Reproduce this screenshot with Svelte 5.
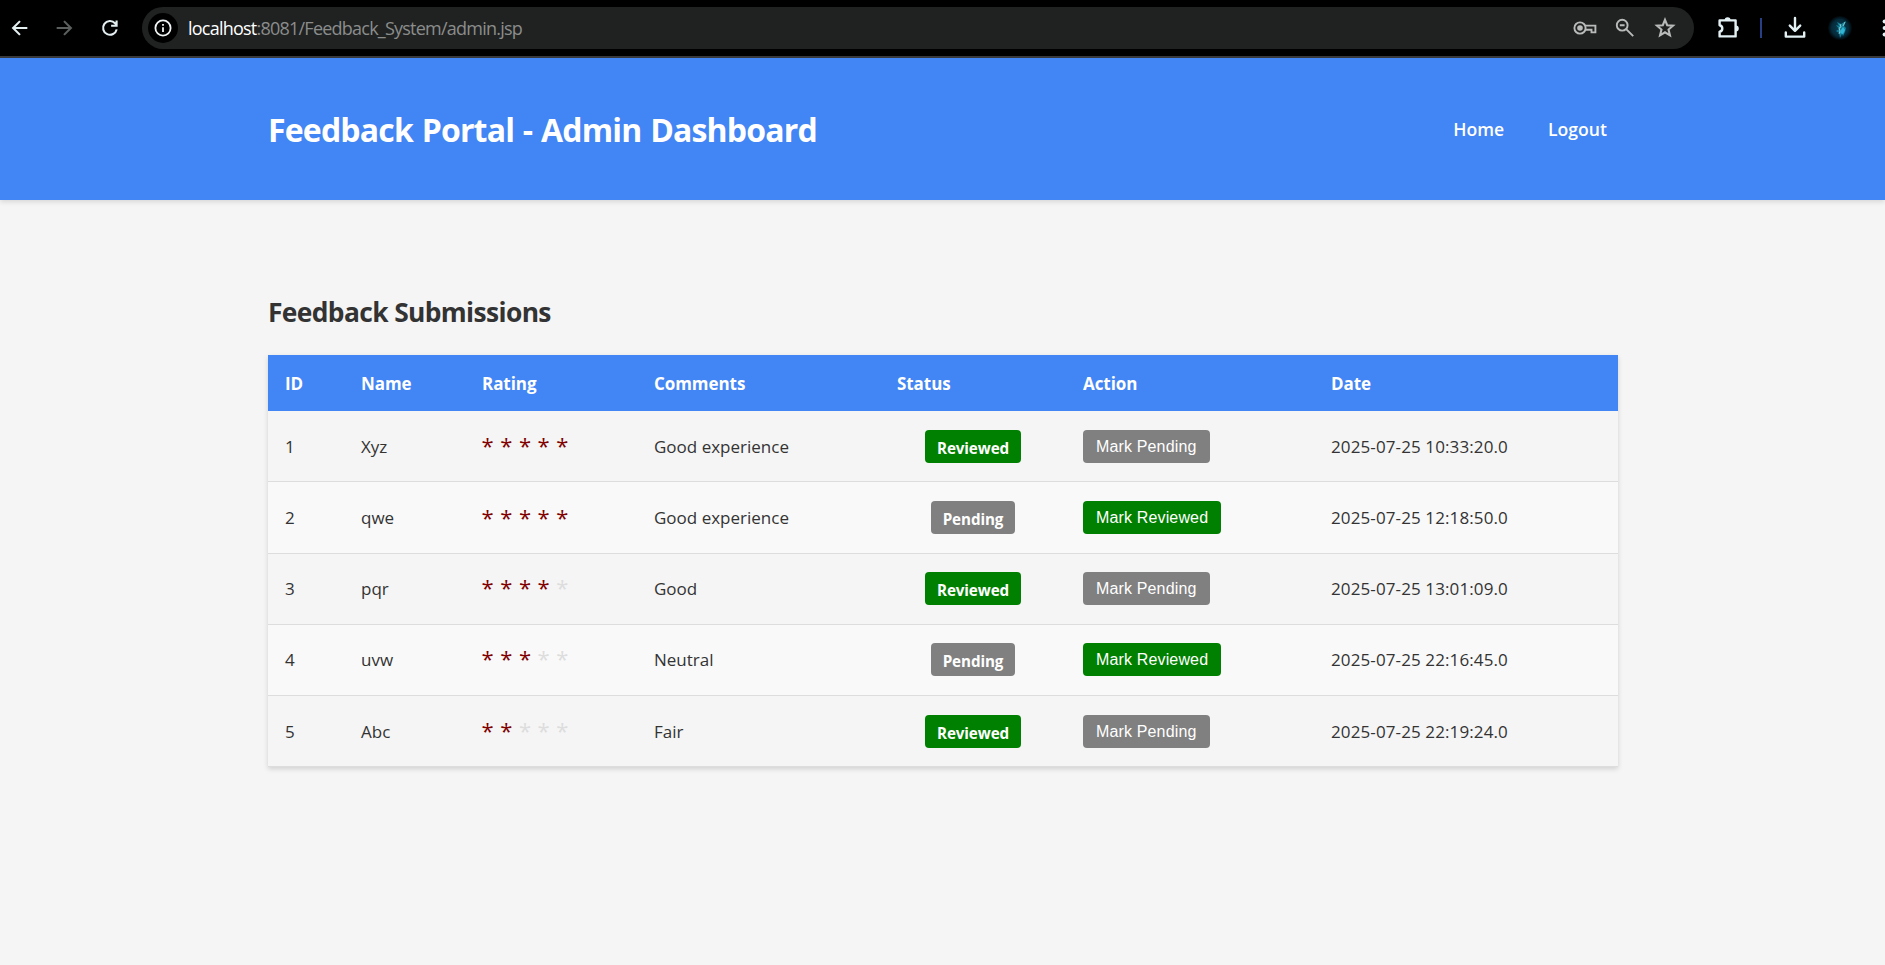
<script>
  const rows = [
    { id: 1, name: 'Xyz', rating: 5, comment: 'Good experience', reviewed: true, date: '2025-07-25 10:33:20.0' },
    { id: 2, name: 'qwe', rating: 5, comment: 'Good experience', reviewed: false, date: '2025-07-25 12:18:50.0' },
    { id: 3, name: 'pqr', rating: 4, comment: 'Good', reviewed: true, date: '2025-07-25 13:01:09.0' },
    { id: 4, name: 'uvw', rating: 3, comment: 'Neutral', reviewed: false, date: '2025-07-25 22:16:45.0' },
    { id: 5, name: 'Abc', rating: 2, comment: 'Fair', reviewed: true, date: '2025-07-25 22:19:24.0' }
  ];
  const stars = [1, 2, 3, 4, 5];
</script>

<div class="browser">
  <svg class="ic back" viewBox="0 0 24 24"><path d="M20 12H5M12 4.5L4.5 12l7.5 7.5" /></svg>
  <svg class="ic fwd" viewBox="0 0 24 24"><path d="M4 12h15M12 4.5l7.5 7.5-7.5 7.5" /></svg>
  <svg class="ic reload" viewBox="0 0 24 24"><path d="M19.3 13.5a7.5 7.5 0 1 1-1.8-6.7L19.6 9M19.2 3.8v5.8h-6" /></svg>
  <div class="omnibox">
    <span class="info">
      <svg viewBox="0 0 20 20"><circle cx="10" cy="10" r="7.6" /><path d="M10 9.2v4.8M10 6v1.8" /></svg>
    </span>
    <span class="url"><b>localhost</b>:8081/Feedback_System/admin.jsp</span>
    <svg class="oi key" viewBox="0 0 24 16"><circle cx="7" cy="8" r="5.6" /><circle class="dot" cx="7" cy="8" r="2.8" /><path d="M12 5.6h10.4v6.8h-3.9V9.8h-6.2" /></svg>
    <svg class="oi lens" viewBox="0 0 20 20"><circle cx="7.2" cy="7.2" r="5.4" /><path d="M4.8 7.2h4.8M11.2 11.2l7 7" /></svg>
    <svg class="oi star" viewBox="0 0 20 20"><path d="M10 2.6l2 4.9 5.3.4-4.1 3.5 1.3 5.3L10 13.9l-4.5 2.8 1.3-5.3-4.1-3.5L8 7.5z" /></svg>
  </div>
  <svg class="ti puzzle" viewBox="0 0 24 24"><path d="M3.6 4.4h16v16h-16v-4.8c3.6-.6 3.6-5.8 0-6.4z" /><path class="solid" d="M8.6 4.2a3 3 0 0 1 6 0zM19.8 9.4a3 3 0 0 1 0 6z" /></svg>
  <span class="sep"></span>
  <svg class="ti download" viewBox="0 0 24 24"><path d="M12 2v12.5M6.8 9.6L12 14.8l5.2-5.2M2.8 16.5v4.1h18.4v-4.1" /></svg>
  <svg class="avatar" viewBox="0 0 24 24">
    <defs><radialGradient id="av"><stop offset="0" stop-color="#0a4054" /><stop offset=".7" stop-color="#052a3a" /><stop offset="1" stop-color="#010609" /></radialGradient></defs>
    <circle cx="12" cy="12" r="12" fill="url(#av)" />
    <path d="M9 6l4 2 5-3-2 5 2 2-1 4-2 4-1-2-2 4-1-5-3-2 3-2-3-4 3 1z" fill="#157f99" />
    <path d="M15 11l2 3-2 4-3-1 1-3z" fill="#2fb6d6" />
    <path d="M12 8l1 3-2 1 1 3-1 3M17 6l-2 4" stroke="#8fcfd2" stroke-width=".9" />
  </svg>
  <svg class="dots" viewBox="0 0 4 20"><circle cx="2.6" cy="3.5" r="2" /><circle cx="2.6" cy="10" r="2" /><circle cx="2.6" cy="16.5" r="2" /></svg>
</div>

<header>
  <h1>Feedback Portal - Admin Dashboard</h1>
  <nav><a href="#home">Home</a><a href="#logout">Logout</a></nav>
</header>

<main>
  <h2>Feedback Submissions</h2>
  <table>
    <thead>
      <tr><th>ID</th><th>Name</th><th>Rating</th><th>Comments</th><th>Status</th><th>Action</th><th>Date</th></tr>
    </thead>
    <tbody>
      {#each rows as r}
        <tr>
          <td>{r.id}</td>
          <td>{r.name}</td>
          <td><div class="stars">{#each stars as s}<span class:on={s <= r.rating}>*</span>{/each}</div></td>
          <td>{r.comment}</td>
          <td class="status"><span class="badge" class:green={r.reviewed}>{r.reviewed ? 'Reviewed' : 'Pending'}</span></td>
          <td><button class:green={!r.reviewed}>{r.reviewed ? 'Mark Pending' : 'Mark Reviewed'}</button></td>
          <td class="date">{r.date}</td>
        </tr>
      {/each}
    </tbody>
  </table>
</main>

<style>
  :global(body) { margin: 0; background: #f5f5f5; }
  :global(#app) { font-family: "Open Sans", "Noto Sans", sans-serif; font-size: 17px; color: #333; overflow: hidden; height: 965px; }
  .browser { box-sizing: border-box; height: 58px; background: #000; border-bottom: 2px solid #3a3b3d; display: flex; align-items: center; overflow: hidden; }
  svg { flex: none; display: block; fill: none; stroke-linejoin: miter; }
  .ic { width: 22px; height: 22px; stroke: #e4eff2; stroke-width: 2.3; }
  .back { margin-left: 9px; }
  .fwd { margin-left: 22px; stroke: #5b605f; }
  .reload { margin-left: 24px; }
  .omnibox { box-sizing: border-box; margin-left: 21px; width: 1552px; height: 42px; border-radius: 21px; background: #202222; display: flex; align-items: center; padding-left: 6px; flex: none; }
  .info { width: 30px; height: 30px; border-radius: 50%; background: #000; display: flex; align-items: center; justify-content: center; }
  .info svg { width: 20px; height: 20px; stroke: #f0f4f4; stroke-width: 1.8; }
  .url { margin-left: 10px; flex: 1; font-size: 18px; line-height: 24px; letter-spacing: -0.77px; color: #8b8d8c; white-space: nowrap; }
  .url b { font-weight: 400; color: #fff; }
  .oi { stroke: #b9bbba; stroke-width: 1.9; }
  .key { width: 24px; height: 16px; margin-right: 18px; }
  .key .dot { fill: #b9bbba; stroke: none; }
  .lens { width: 20px; height: 20px; margin-right: 19px; }
  .star { width: 22px; height: 22px; margin-right: 18px; }
  .ti { stroke: #e4f1f4; stroke-width: 2.4; width: 24px; height: 24px; }
  .puzzle { margin-left: 22px; stroke-linejoin: round; }
  .puzzle .solid { fill: #e4f1f4; stroke: none; }
  .sep { flex: none; width: 2px; height: 20px; background: #263f87; margin-left: 20px; }
  .download { margin-left: 21px; stroke-linejoin: round; stroke-linecap: round; }
  .avatar { width: 24px; height: 24px; margin-left: 21px; }
  .dots { width: 4px; height: 20px; margin-left: 30px; fill: #e4f1f4; }
  header { box-sizing: border-box; height: 142px; padding: 0 267px 0 268px; background: #4285f4; color: #fff; display: flex; align-items: center; justify-content: space-between; box-shadow: 0 2px 5px rgba(0, 0, 0, .12); }
  h1 { margin: 0; padding-top: 2px; font-size: 32px; line-height: 44px; letter-spacing: -0.82px; word-spacing: 1.2px; font-weight: 700; white-space: nowrap; }
  nav { display: flex; gap: 44px; padding-right: 11px; }
  nav a { color: #fff; text-decoration: none; font-weight: 600; font-size: 17.6px; line-height: 24px; }
  main { padding: 92px 267px 0 268px; }
  h2 { margin: 0 0 23px; font-size: 26.4px; line-height: 40px; font-weight: 700; letter-spacing: -0.63px; }
  table { width: 1350px; table-layout: fixed; border-collapse: separate; border-spacing: 0; box-shadow: 0 2px 5px rgba(0, 0, 0, .15); }
  th, td { box-sizing: border-box; padding: 0 0 0 17px; text-align: left; white-space: nowrap; vertical-align: middle; }
  th { height: 56px; background: #4285f4; color: #fff; font-weight: 700; font-size: 17px; letter-spacing: -0.06px; }
  th:nth-child(1) { width: 76px; }
  th:nth-child(2) { width: 121px; }
  th:nth-child(3) { width: 172px; }
  th:nth-child(4) { width: 243px; }
  th:nth-child(5) { width: 186px; }
  th:nth-child(6) { width: 248px; }
  td { height: 71px; border-bottom: 1px solid #ddd; background: #f5f5f5; letter-spacing: 0; }
  td.date { letter-spacing: 0.11px; }
  td.status { padding-left: 0; text-align: center; }
  tr:nth-child(2) td { height: 72px; }
  tr:nth-child(3) td, tr:nth-child(4) td { padding-bottom: 2px; }
  tr:nth-child(even) td { background: #f9f9f9; }
  .stars { display: flex; line-height: 30px; padding-bottom: 2px; margin-left: -0.5px; font-size: 22px; }
  .stars span { width: 18.7px; color: #ddd; }
  .stars .on { color: #800000; }
  .badge, button { display: inline-block; height: 33px; line-height: 33px; border-radius: 4px; background: gray; color: #fff; vertical-align: middle; }
  .badge { padding: 0 11.8px; font-size: 15.2px; font-weight: 700; line-height: 36px; letter-spacing: -0.1px; }
  button { border: 0; padding: 0 13px; font: 16px/33px "Liberation Sans", Arial, sans-serif; letter-spacing: 0.15px; }
  button.green, .badge.green { background: green; }
</style>
